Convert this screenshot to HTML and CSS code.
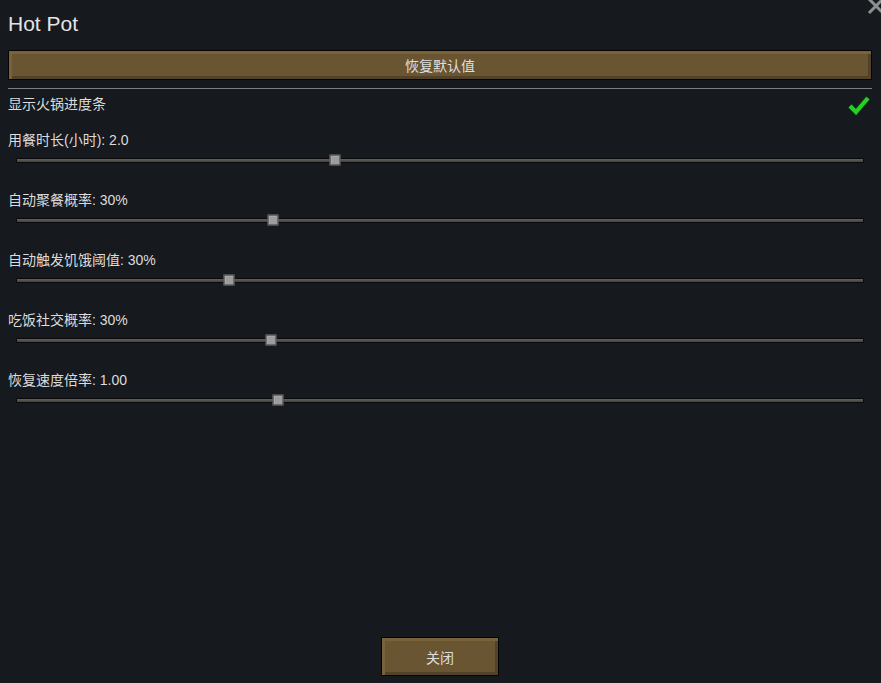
FILE: index.html
```html
<!DOCTYPE html>
<html lang="zh">
<head>
<meta charset="utf-8">
<title>Hot Pot</title>
<link rel="stylesheet" href="styles.css">
</head>
<body>
<div class="dialog">
  <svg class="close-x" width="18" height="18" viewBox="0 0 18 18" aria-hidden="true">
    <path d="M3 3 L15 15 M15 3 L3 15" stroke="#8c8e90" stroke-width="3" stroke-linecap="square"/>
  </svg>
  <h1 class="title">Hot Pot</h1>
  <button class="btn btn-wide">恢复默认值</button>
  <div class="divider"></div>
  <div class="check-row">
    <span class="label">显示火锅进度条</span>
    <svg class="check" width="24" height="22" viewBox="0 0 24 22" aria-hidden="true">
      <path d="M3 12 L9 18 L21 4" fill="none" stroke="#0d3d0d" stroke-width="6" stroke-linejoin="miter"/>
      <path d="M3 12 L9 18 L21 4" fill="none" stroke="#27d027" stroke-width="4" stroke-linejoin="miter"/>
    </svg>
  </div>
  <div class="sliders">
    <div class="slider-row">
      <div class="label">用餐时长(小时): 2.0</div>
      <div class="track-area"><div class="track"><span class="thumb" style="left:318px"></span></div></div>
    </div>
    <div class="slider-row">
      <div class="label">自动聚餐概率: 30%</div>
      <div class="track-area"><div class="track"><span class="thumb" style="left:256px"></span></div></div>
    </div>
    <div class="slider-row">
      <div class="label">自动触发饥饿阈值: 30%</div>
      <div class="track-area"><div class="track"><span class="thumb" style="left:212px"></span></div></div>
    </div>
    <div class="slider-row">
      <div class="label">吃饭社交概率: 30%</div>
      <div class="track-area"><div class="track"><span class="thumb" style="left:254px"></span></div></div>
    </div>
    <div class="slider-row">
      <div class="label">恢复速度倍率: 1.00</div>
      <div class="track-area"><div class="track"><span class="thumb" style="left:261px"></span></div></div>
    </div>
  </div>
  <div class="footer">
    <button class="btn btn-close">关闭</button>
  </div>
</div>
</body>
</html>
```
FILE: styles.css
```css
* { box-sizing: border-box; }
html, body {
  margin: 0;
  padding: 0;
  background: #16191e;
}
body {
  font-family: "Liberation Sans", "Noto Sans CJK SC", Arial, sans-serif;
  color: #dcdcdc;
}
.dialog {
  position: relative;
  width: 881px;
  height: 683px;
  padding: 12px 9px 7px 8px;
  display: flex;
  flex-direction: column;
}
.close-x {
  position: absolute;
  top: -3px;
  right: -4px;
}
.title {
  margin: 0;
  font-weight: normal;
  font-size: 21px;
  line-height: 24px;
  color: #e4e4e4;
}
.btn {
  font-family: "Liberation Sans", "Noto Sans CJK SC", sans-serif;
  font-size: 14px;
  color: #dedede;
  background: #6a5532;
  border: 1px solid #050505;
  box-shadow: inset 3px 3px 0 #78623a, inset -3px -3px 0 #52422a;
  padding: 0;
  cursor: pointer;
}
.btn-wide {
  margin-top: 14px;
  height: 30px;
  width: 100%;
}
.divider {
  margin-top: 8px;
  height: 1px;
  background: #7b7e82;
}
.check-row {
  margin-top: 3px;
  height: 24px;
  display: flex;
  align-items: center;
  justify-content: space-between;
}
.check {
  margin-right: 1px;
  margin-top: 2px;
}
.label {
  font-size: 14px;
  line-height: 20px;
  color: #dcdcdc;
}
.sliders {
  margin-top: 14px;
  display: flex;
  flex-direction: column;
}
.slider-row {
  height: 60px;
}
.track-area {
  height: 20px;
  display: flex;
  align-items: center;
  padding: 0 8px;
}
.track {
  position: relative;
  flex: 1;
  height: 5px;
  border: 1px solid #0a0a0a;
  border-radius: 1px;
  background: linear-gradient(#606060, #424242);
}
.thumb {
  position: absolute;
  top: 50%;
  width: 11px;
  height: 11px;
  transform: translate(-50%, -50%);
  background: #9c9c9c;
  border: 1px solid #3a3a3a;
  box-shadow: inset 1px 1px 0 #b0b0b0;
}
.footer {
  margin-top: auto;
  display: flex;
  justify-content: center;
}
.btn-close {
  width: 118px;
  height: 39px;
  font-size: 14px;
}
```
